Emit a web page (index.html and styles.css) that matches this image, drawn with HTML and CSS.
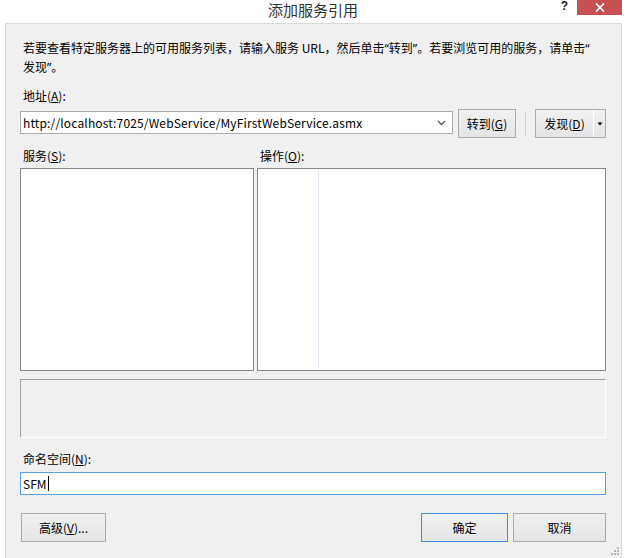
FILE: index.html
```html
<!DOCTYPE html>
<html>
<head>
    <meta charset="UTF-8">
    <title>添加服务引用</title>
    <link rel="stylesheet" href="styles.css">
</head>
<body>
    <div class="titlebar">
        <div></div>
        <div class="title">添加服务引用</div>
        <div class="ctrls">
            <span class="help">?</span>
            <span class="close"><svg width="10" height="9" viewBox="0 0 10 9"><path d="M1 0.5L9 8.5M9 0.5L1 8.5" stroke="#fff" stroke-width="1.7"/></svg></span>
        </div>
    </div>
    <div class="client">
        <p class="desc">若要查看特定服务器上的可用服务列表，请输入服务 URL，然后单击<span class="q">“</span>转到<span class="q">”</span>。若要浏览可用的服务，请单击<span class="q">“</span><br>发现<span class="q">”</span>。</p>
        <div class="lbl addr-lbl">地址(<u>A</u>):</div>
        <div class="addr-row">
            <div class="combo">
                <span class="url">http://localhost:7025/WebService/MyFirstWebService.asmx</span>
                <svg class="chev" width="9" height="6" viewBox="0 0 9 6"><path d="M1 1L4.5 4.5L8 1" stroke="#555" stroke-width="1.3" fill="none"/></svg>
            </div>
            <div class="btn go">转到(<u>G</u>)</div>
            <div class="sep"></div>
            <div class="btn split">
                <span class="main">发现(<u>D</u>)</span>
                <span class="drop"><svg width="6" height="4" viewBox="0 0 6 4"><path d="M0.5 0.5H5.5L3 3.5Z" fill="#000"/></svg></span>
            </div>
        </div>
        <div class="lists-head">
            <div class="lbl">服务(<u>S</u>):</div>
            <div class="lbl">操作(<u>O</u>):</div>
        </div>
        <div class="lists">
            <div class="list"></div>
            <div class="list"><div class="col"></div></div>
        </div>
        <div class="info"></div>
        <div class="lbl ns-lbl">命名空间(<u>N</u>):</div>
        <div class="input">SFM<span class="caret"></span></div>
        <div class="footer">
            <div class="btn adv">高级(<u>V</u>)...</div>
            <div class="btn ok">确定</div>
            <div class="btn cancel">取消</div>
        </div>
        <svg class="grip" width="9" height="9" viewBox="0 0 9 9">
            <rect x="6" y="0" width="2" height="2" fill="#b4b4b4"/>
            <rect x="3" y="3" width="2" height="2" fill="#b4b4b4"/>
            <rect x="6" y="3" width="2" height="2" fill="#b4b4b4"/>
            <rect x="0" y="6" width="2" height="2" fill="#b4b4b4"/>
            <rect x="3" y="6" width="2" height="2" fill="#b4b4b4"/>
            <rect x="6" y="6" width="2" height="2" fill="#b4b4b4"/>
        </svg>
    </div>
</body>
</html>
```

FILE: styles.css
```css
*{
    margin:0;
    padding:0;
    box-sizing:border-box;
}
body{
    width:626px;
    height:558px;
    overflow:hidden;
    background:#fff;
    font-family:"Noto Sans CJK SC","Noto Sans",sans-serif;
    font-size:12px;
    color:#000;
}
u{
    text-decoration:underline;
}
.titlebar{
    height:23px;
    display:grid;
    grid-template-columns:1fr auto 1fr;
}
.title{
    font-size:15px;
    line-height:19px;
    color:#333;
}
.ctrls{
    display:flex;
    justify-content:flex-end;
    align-items:flex-start;
}
.help{
    font-family:"Liberation Sans",sans-serif;
    font-weight:bold;
    font-size:12px;
    line-height:13px;
    margin:0 9px 0 0;
    color:#222;
}
.close{
    width:45px;
    height:15px;
    margin-right:4px;
    background:#c75050;
    display:flex;
    align-items:center;
    justify-content:center;
}
.client{
    position:relative;
    margin-left:5px;
    width:617px;
    height:535px;
    border:1px solid #d9d9d9;
    border-bottom:none;
    background:#f0f0f0;
    padding:14px 15px 0 14px;
}
.desc{
    height:38px;
    line-height:19px;
    padding-left:3px;
    white-space:nowrap;
}
.q{
    font-family:"Noto Sans",sans-serif;
    line-height:1;
}
.lbl{
    line-height:18px;
    padding-left:3px;
}
.addr-lbl{
    margin-top:11px;
}
.addr-row{
    margin-top:4px;
    height:29px;
    display:flex;
    align-items:flex-start;
}
.combo{
    width:433px;
    height:23px;
    margin-top:2px;
    background:#fff;
    border:1px solid #abadb3;
    display:flex;
    align-items:center;
    padding:0 6px 0 2px;
}
.url{
    flex:1;
    line-height:20px;
    letter-spacing:0.15px;
}
.btn{
    height:29px;
    border:1px solid #acacac;
    background:linear-gradient(#f0f0f0,#e5e5e5);
    display:flex;
    align-items:center;
    justify-content:center;
    line-height:18px;
}
.go{
    width:58px;
    margin-left:5px;
}
.sep{
    width:1px;
    height:24px;
    margin:2px 9px 0;
    background:#cfcfcf;
}
.split{
    width:71px;
    justify-content:flex-start;
}
.split .main{
    width:57px;
    text-align:center;
}
.split .drop{
    flex:1;
    height:100%;
    border-left:1px solid #fff;
    display:flex;
    align-items:center;
    justify-content:center;
}
.lists-head{
    margin-top:9px;
    display:grid;
    grid-template-columns:234px 1fr;
    gap:3px;
}
.lists{
    margin-top:3px;
    height:203px;
    display:grid;
    grid-template-columns:234px 1fr;
    gap:3px;
}
.list{
    background:#fff;
    border:1px solid #828790;
    padding:1px 0;
}
.col{
    width:61px;
    height:100%;
    border-right:1px solid #e3ecf8;
}
.info{
    margin-top:8px;
    height:59px;
    border:1px solid #a0a0a0;
    border-right-color:#fff;
    border-bottom-color:#fff;
}
.ns-lbl{
    margin-top:12px;
}
.input{
    margin-top:4px;
    height:23px;
    background:#fff;
    border:1px solid #569de5;
    padding-left:2px;
    line-height:21px;
    display:flex;
    align-items:center;
}
.caret{
    width:1px;
    height:15px;
    margin-left:1px;
    background:#000;
}
.footer{
    margin-top:18px;
    display:flex;
}
.adv{
    width:85px;
    margin-left:1px;
}
.ok{
    width:87px;
    margin-left:auto;
    border-color:#3c8fe3;
}
.cancel{
    width:93px;
    margin-left:5px;
}
.grip{
    position:absolute;
    right:1px;
    top:523px;
}
```
